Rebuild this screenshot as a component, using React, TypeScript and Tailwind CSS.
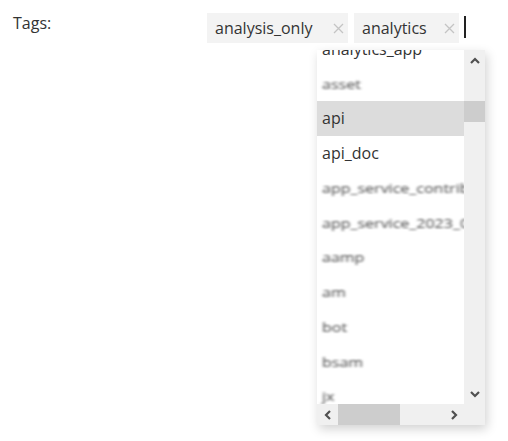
import React from "react";

const Chev = ({ dir }: { dir: "up" | "down" | "left" | "right" }) => {
  const pts: Record<string, string> = {
    up: "1,6 5,2 9,6",
    down: "1,2 5,6 9,2",
    left: "6,1 2,5 6,9",
    right: "2,1 6,5 2,9",
  };
  const vertical = dir === "up" || dir === "down";
  return (
    <svg
      width={vertical ? 10 : 8}
      height={vertical ? 8 : 10}
      viewBox={vertical ? "0 0 10 8" : "0 0 8 10"}
    >
      <polyline points={pts[dir]} fill="none" stroke="#505050" strokeWidth={2.2} />
    </svg>
  );
};

const X = () => (
  <svg width="11" height="11" viewBox="0 0 11 11">
    <path d="M1 1 L10 10 M10 1 L1 10" stroke="#c4c4c4" strokeWidth={1.3} />
  </svg>
);

const Chip = ({ label, w }: { label: string; w: string }) => (
  <div className={`flex h-[30px] items-center justify-between bg-[#f3f3f3] pl-[8px] pr-[4px] ${w}`}>
    <span>{label}</span>
    <X />
  </div>
);

type Item = { t: string; blur?: boolean; active?: boolean };

const items: Item[] = [
  { t: "analytics_app" },
  { t: "asset", blur: true },
  { t: "api", active: true },
  { t: "api_doc" },
  { t: "app_service_contrib", blur: true },
  { t: "app_service_2023_07", blur: true },
  { t: "aamp", blur: true },
  { t: "am", blur: true },
  { t: "bot", blur: true },
  { t: "bsam", blur: true },
  { t: "jx", blur: true },
  { t: "jxq", blur: true },
];

export default function App() {
  return (
    <div
      className="relative h-[441px] w-[508px] bg-white text-[16px] text-[#333]"
      style={{ fontFamily: "'Open Sans', 'Noto Sans', sans-serif" }}
    >
      <div className="flex pt-[13px]">
        <div className="w-[207px] pl-[13px] leading-[20px]">Tags:</div>
        <div className="relative flex items-start gap-[6px]">
          <Chip label="analysis_only" w="w-[141px]" />
          <Chip label="analytics" w="w-[105px]" />
          <div className="ml-[-1px] mt-[3px] h-[22px] w-[1.5px] bg-[#222]" />

          <div className="absolute left-[110px] top-[37px] flex h-[375px] w-[168px] flex-col bg-white shadow-[2px_4px_10px_rgba(0,0,0,0.18)]">
            <div className="flex min-h-0 flex-1">
              <div className="relative w-[147px] overflow-hidden">
                <div className="mt-[-18.5px] flex flex-col">
                  {items.map((it, i) => (
                    <div
                      key={i}
                      className={`flex h-[34.75px] shrink-0 items-center whitespace-nowrap pl-[5px] ${
                        it.active ? "bg-[#dcdcdc]" : ""
                      }`}
                    >
                      <span
                        className={
                          it.blur
                            ? "inline-block origin-left text-[#444] [filter:blur(1.4px)] [transform:scaleY(0.75)]"
                            : ""
                        }
                      >
                        {it.t}
                      </span>
                    </div>
                  ))}
                </div>
              </div>
              <div className="flex w-[21px] flex-col bg-[#f0f0f0]">
                <div className="flex h-[21px] items-center justify-center">
                  <Chev dir="up" />
                </div>
                <div className="mt-[30px] h-[21px] bg-[#cdcdcd]" />
                <div className="flex-1" />
                <div className="flex h-[21px] items-center justify-center">
                  <Chev dir="down" />
                </div>
              </div>
            </div>
            <div className="flex h-[21px] bg-[#f0f0f0]">
              <div className="flex w-[21px] items-center justify-center">
                <Chev dir="left" />
              </div>
              <div className="w-[62px] bg-[#cdcdcd]" />
              <div className="flex-1" />
              <div className="flex w-[21px] items-center justify-center">
                <Chev dir="right" />
              </div>
              <div className="w-[21px]" />
            </div>
          </div>
        </div>
      </div>
    </div>
  );
}
